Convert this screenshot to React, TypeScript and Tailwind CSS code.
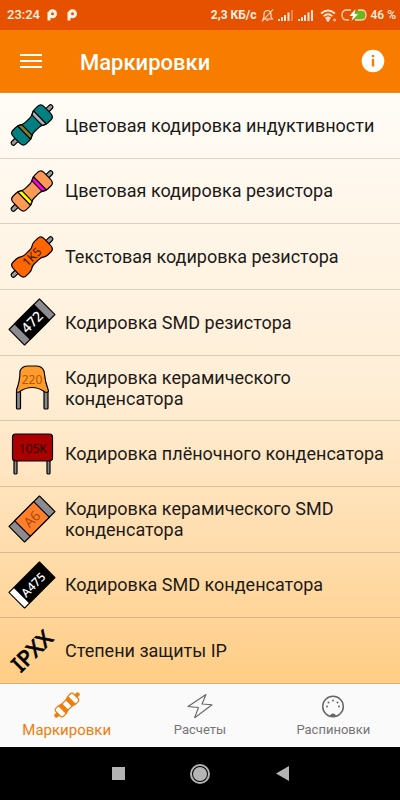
import type { ReactNode } from "react";

const Pic = ({ children, angle = 0 }: { children: ReactNode; angle?: number }) => (
  <svg viewBox="-24 -24 48 48" className="size-12 shrink-0 overflow-visible" aria-hidden="true" fontFamily="'Noto Sans', 'Open Sans', sans-serif">
    <g transform={`rotate(${angle})`} stroke="#000" strokeWidth="1.2" strokeLinejoin="round">
      {children}
    </g>
  </svg>
);

const BODY =
  "M-21.5 -4.5Q-21.5 -9.5 -17 -9.5H-13Q-10 -9.5 -8 -8Q-6 -6.5 -3 -6.5H3Q6 -6.5 8 -8Q10 -9.5 13 -9.5H17Q21.5 -9.5 21.5 -4.5V4.5Q21.5 9.5 17 9.5H13Q10 9.5 8 8Q6 6.5 3 6.5H-3Q-6 6.5 -8 8Q-10 9.5 -13 9.5H-17Q-21.5 9.5 -21.5 4.5Z";

const Resistor = ({ fill, bands, label }: { fill: string; bands?: [string, string]; label?: string }) => (
  <Pic angle={-44}>
    <rect x="-28" y="-2.2" width="9" height="4.4" rx="2" fill="#999" />
    <rect x="19" y="-2.2" width="9" height="4.4" rx="2" fill="#999" />
    <path d={BODY} fill={fill} />
    {bands && (
      <>
        <path d="M-11 -9.2L-7 -7.3V7.3L-11 9.2Z" fill={bands[0]} />
        <path d="M11 -9.2L7 -7.3V7.3L11 9.2Z" fill={bands[1]} />
      </>
    )}
    {label && (
      <text y="4" textAnchor="middle" fontSize="12" fill="#3a1700" stroke="none">{label}</text>
    )}
  </Pic>
);

const Chip = ({ body, end, ink, label, weight }: { body: string; end: string; ink: string; label: string; weight: number }) => (
  <Pic angle={-45}>
    <rect x="-21.5" y="-11" width="43" height="22" fill={end} />
    <rect x="-13.5" y="-11" width="27" height="22" fill={body} />
    <text y="5" textAnchor="middle" fontSize="14" fontWeight={weight} fill={ink} stroke="none">{label}</text>
  </Pic>
);

const rows: { text: string; icon: ReactNode }[] = [
  { text: "Цветовая кодировка индуктивности", icon: <Resistor fill="#008080" bands={["#857a2c", "#b0b0b8"]} /> },
  { text: "Цветовая кодировка резистора", icon: <Resistor fill="#ff9955" bands={["#ffff00", "#ff00ee"]} /> },
  { text: "Текстовая кодировка резистора", icon: <Resistor fill="#ff6600" label="1K5" /> },
  { text: "Кодировка SMD резистора", icon: <Chip body="#000" end="#8c8c90" ink="#fff" label="472" weight={500} /> },
  {
    text: "Кодировка керамического конденсатора",
    icon: (
      <Pic>
        <rect x="-15.5" y="3" width="4" height="18" rx="1" fill="#888" />
        <rect x="12" y="3" width="4" height="18" rx="1" fill="#888" />
        <path d="M-12 -17Q-10 -22 -4 -22H4Q10 -22 12 -17Q13 -6 16.5 3Q16 5 13 4Q0 -5 -13 4Q-16 5 -15.5 2Q-12 -7 -12 -17Z" fill="#ff9c2e" />
        <text y="-4" textAnchor="middle" fontSize="12" fill="#b85600" stroke="none">220</text>
      </Pic>
    ),
  },
  {
    text: "Кодировка плёночного конденсатора",
    icon: (
      <Pic>
        <rect x="-18" y="5" width="3" height="15" rx="1" fill="#888" />
        <rect x="15" y="5" width="3" height="15" rx="1" fill="#888" />
        <rect x="-19.5" y="-20" width="40" height="27" rx="3" fill="#aa0000" />
        <text x="1" y="-1" textAnchor="middle" fontSize="12" fill="#1c0000" stroke="none">105K</text>
      </Pic>
    ),
  },
  { text: "Кодировка керамического SMD конденсатора", icon: <Chip body="#ff7f2a" end="#8c8c90" ink="#b04a08" label="A6" weight={400} /> },
  {
    text: "Кодировка SMD конденсатора",
    icon: (
      <Pic angle={-45}>
        <rect x="-21.5" y="-11" width="43" height="22" fill="#000" />
        <rect x="-21" y="-10.5" width="6" height="21" fill="#fff" stroke="none" />
        <text x="1" y="5" textAnchor="middle" fontSize="12" fontWeight="500" fill="#fff" stroke="none">A475</text>
      </Pic>
    ),
  },
  {
    text: "Степени защиты IP",
    icon: (
      <Pic angle={-45}>
        <text y="8" textAnchor="middle" fontSize="22" fontWeight="500" fill="#000" stroke="#000" strokeWidth="0.5">IPXX</text>
      </Pic>
    ),
  },
];

const AppMark = () => (
  <svg viewBox="0 0 10 12" className="h-3 w-[10px]" aria-hidden="true" fill="none" stroke="#fff3e8" strokeWidth="3">
    <circle cx="5.5" cy="4.8" r="3" />
    <path d="M2 3V11.5" />
  </svg>
);

const Signal = ({ faint = false }: { faint?: boolean }) => (
  <svg viewBox="0 0 16 11" className="h-[11px] w-4" aria-hidden="true" fill="#ffe4d0">
    <rect x="0" y="9" width="2" height="2" />
    <rect x="3" y="7" width="2" height="4" />
    <rect x="6" y="5" width="2" height="6" />
    <rect x="9.5" y="2.5" width="2" height="8.5" />
    <rect x="13" y="0" width="2" height="11" opacity={faint ? 0.35 : 1} />
  </svg>
);

function StatusBar() {
  return (
    <div className="flex h-[30px] items-center justify-between bg-[#e65100] pr-1 pl-[7px] text-xs font-medium text-[#fff0e2]">
      <div className="flex items-center gap-[10px]">
        <span className="-mr-[3px] text-[13px]">23:24</span>
        <AppMark />
        <AppMark />
      </div>
      <div className="flex items-center gap-1">
        <span className="font-bold">2,3 КБ/с</span>
        <svg viewBox="0 0 13 13" className="size-[13px]" aria-hidden="true" fill="none" stroke="#ffe4d0" strokeWidth="1.1">
          <path d="M2 10H11.5L10 8V5Q10 2 6.5 1.5Q3 2 3 5V8ZM5.5 11.5H7.5M12 0.5L1 12.5" />
        </svg>
        <Signal faint />
        <Signal />
        <svg viewBox="0 0 17 13" className="ml-0.5 h-[13px] w-[17px]" aria-hidden="true" fill="none" stroke="#ffe4d0" strokeWidth="1.7">
          <path d="M1 4.5Q8 -1.5 15 4.5M3.5 7.2Q8 3.300 12.5 7.2M5.5 9.5Q8 7.5 10.5 9.5" />
          <circle cx="8" cy="11" r="0.8" fill="#ffe4d0" />
          <circle cx="14.5" cy="11" r="1" strokeWidth="1" />
        </svg>
        <svg viewBox="0 0 26 12" className="h-3 w-[26px]" aria-hidden="true">
          <path d="M15 1.5H19.5Q24 1.5 24 6T19.5 10.5H11Z" fill="#66b81c" />
          <path d="M10 1H6Q1 1 1 6T6 11H8M17 1H20Q25 1 25 6T20 11H14" fill="none" stroke="#ffd6b8" strokeWidth="1.3" />
          <path d="M14.5 0L8.5 7H12L10.5 12L17 5H13.5Z" fill="#fff" />
        </svg>
        <span className="font-medium">46 %</span>
      </div>
    </div>
  );
}

const tabs: { text: string; active?: boolean; icon: ReactNode }[] = [
  {
    text: "Маркировки",
    active: true,
    icon: (
      <svg viewBox="-13 -13 26 26" className="size-[26px]" aria-hidden="true">
        <g transform="rotate(-45)" stroke="#ef7d0c" strokeWidth="1.2" fill="#fff">
          <rect x="-16.5" y="-1.5" width="5" height="3" rx="1.5" fill="#ef7d0c" />
          <rect x="11.5" y="-1.5" width="5" height="3" rx="1.5" fill="#ef7d0c" />
          <path d="M-12.5 -3Q-12.5 -5.5 -10 -5.5H-7.5Q-5.5 -5.5 -4 -4.3H4Q5.5 -5.5 7.5 -5.5H10Q12.5 -5.5 12.5 -3V3Q12.5 5.5 10 5.5H7.5Q5.5 5.5 4 4.3H-4Q-5.5 5.5 -7.5 5.5H-10Q-12.5 5.5 -12.5 3Z" />
          <path d="M-6.5 -5L-3 -4.3V4.3L-6.5 5ZM6.5 -5L3 -4.3V4.3L6.5 5Z" fill="#ef7d0c" />
        </g>
      </svg>
    ),
  },
  {
    text: "Расчеты",
    icon: (
      <svg viewBox="0 0 26 26" className="size-[26px]" aria-hidden="true" fill="none" stroke="#666" strokeWidth="1.1" strokeLinejoin="round">
        <path d="M19 2.5L1 14.5L11.500 15.500L7.5 26L25 12.800L15 12Z" />
      </svg>
    ),
  },
  {
    text: "Распиновки",
    icon: (
      <svg viewBox="0 0 26 26" className="size-[26px]" aria-hidden="true" fill="#666">
        <circle cx="13" cy="14.5" r="10.3" fill="none" stroke="#666" strokeWidth="1.5" />
        <circle cx="13" cy="8.5" r="1" />
        <circle cx="8.500" cy="10.5" r="1" />
        <circle cx="17.5" cy="10.5" r="1" />
        <circle cx="7" cy="14.5" r="1" />
        <circle cx="19" cy="14.5" r="1" />
        <path d="M10.5 24.5V23Q10.5 21.5 13 21.5T15.5 23V24.5Z" />
      </svg>
    ),
  },
];

export default function App() {
  return (
    <div className="flex min-h-screen flex-col bg-black font-['Roboto','Noto_Sans',sans-serif]">
      <StatusBar />
      <header className="flex h-[63px] items-center border-b border-[#e88a2c] bg-[#f77c00] pr-[15px] pl-5 text-white">
        <button type="button" aria-label="Меню" className="flex w-[22px] flex-col gap-1">
          <span className="h-[2px] w-full bg-white" />
          <span className="h-[2px] w-full bg-white" />
          <span className="h-[2px] w-full bg-white" />
        </button>
        <h1 className="ml-[38px] flex-1 pt-[3px] text-[22px] leading-7 font-medium">Маркировки</h1>
        <button type="button" aria-label="Информация">
          <svg viewBox="0 0 24 24" className="size-6" aria-hidden="true">
            <circle cx="12" cy="12" r="11.3" fill="#fff" />
            <path d="M10.8 6H13.2V8.2H10.8ZM10.8 10H13.2V17.5H10.8Z" fill="#f77c00" />
          </svg>
        </button>
      </header>
      <main className="flex flex-1 flex-col bg-linear-to-b from-[#fffcf7] via-[#ffeed6] to-[#ffcd85]">
        <ul className="grid flex-1 auto-rows-fr">
          {rows.map((r) => (
            <li key={r.text} className="border-b border-black/15">
              <button type="button" className="flex h-full w-full items-center gap-[9px] px-2 text-left text-lg leading-[21px] text-[#1c1a18]">
                {r.icon}
                <span className="flex-1">{r.text}</span>
              </button>
            </li>
          ))}
        </ul>
      </main>
      <nav className="grid h-[63px] grid-cols-3 bg-[#fafafa]">
        {tabs.map((t) => (
          <button
            key={t.text}
            type="button"
            className={
              t.active
                ? "flex flex-col items-center pt-2 text-[15px] leading-6 text-[#ef7d0c]"
                : "flex flex-col items-center pt-2 text-[13px] leading-6 text-[#757575]"
            }
          >
            {t.icon}
            {t.text}
          </button>
        ))}
      </nav>
      <div className="flex h-[53px] items-center justify-center bg-black">
        <button type="button" aria-label="Недавние" className="flex w-[82px] justify-center">
          <span className="size-[13px] bg-[#b4b4b4]" />
        </button>
        <button type="button" aria-label="Домой" className="flex w-[82px] justify-center">
          <span className="flex size-5 items-center justify-center rounded-full border-2 border-[#b4b4b4]">
            <span className="size-[14px] rounded-full bg-[#b4b4b4]" />
          </span>
        </button>
        <button type="button" aria-label="Назад" className="flex w-[82px] justify-center">
          <svg viewBox="0 0 13 15" className="h-[15px] w-[13px]" aria-hidden="true">
            <path d="M0 7.5L13 0V15Z" fill="#b4b4b4" />
          </svg>
        </button>
      </div>
    </div>
  );
}
